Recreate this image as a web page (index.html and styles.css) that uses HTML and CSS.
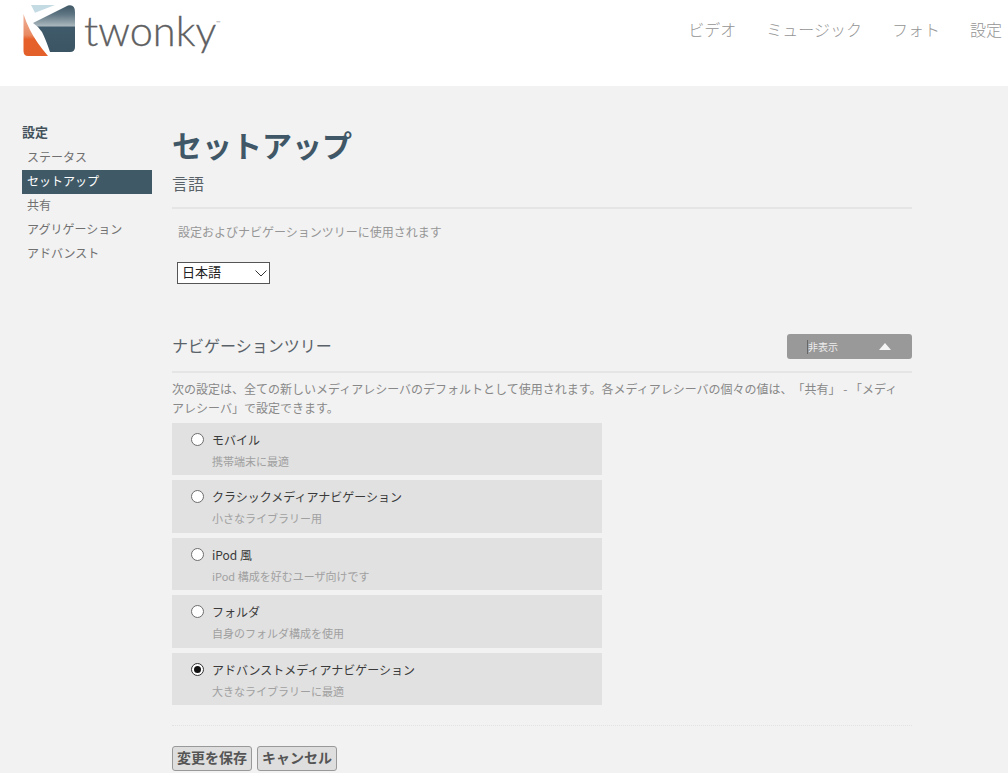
FILE: index.html
```html
<!DOCTYPE html>
<html lang="ja">
<head>
<meta charset="utf-8">
<title>twonky</title>
<link rel="stylesheet" href="styles.css">
</head>
<body>
<header class="header">
  <div class="logo">
    <svg class="logo-mark" width="60" height="60" viewBox="20 0 60 60">
      <defs>
        <linearGradient id="steel" x1="0" y1="0" x2="0" y2="1">
          <stop offset="0" stop-color="#3f5866"/>
          <stop offset="0.2" stop-color="#5f7683"/>
          <stop offset="0.44" stop-color="#a9b6bc"/>
          <stop offset="0.47" stop-color="#3f5a6a"/>
          <stop offset="1" stop-color="#3c5564"/>
        </linearGradient>
        <linearGradient id="ember" x1="0" y1="0" x2="0" y2="1">
          <stop offset="0" stop-color="#eeb39c"/>
          <stop offset="0.5" stop-color="#e98a62"/>
          <stop offset="0.6" stop-color="#e5602a"/>
          <stop offset="1" stop-color="#e4602a"/>
        </linearGradient>
      </defs>
      <path d="M33 23 L68 5.500 Q75 4 75 12 L75 47 Q75 52 70 52 L50 52 Q46 40 42 32 Q39 27 33 23 Z" fill="url(#steel)"/>
      <path d="M31 5 L55 5 L35 12.700 Z" fill="#c4dbe3"/>
      <path d="M23.500 14 L23.500 51 Q23.500 56 28 56 L48 56 Q36 42 30 30 Q26 22 23.500 14 Z" fill="url(#ember)"/>
    </svg>
    <span class="wordmark">twonky<sup class="tm">™</sup></span>
  </div>
  <nav class="topnav">
    <a class="topnav-item">ビデオ</a>
    <a class="topnav-item">ミュージック</a>
    <a class="topnav-item">フォト</a>
    <a class="topnav-item">設定</a>
  </nav>
</header>
<div class="page">
  <aside class="sidebar">
    <div class="side-title">設定</div>
    <a class="side-item">ステータス</a>
    <a class="side-item active">セットアップ</a>
    <a class="side-item">共有</a>
    <a class="side-item">アグリゲーション</a>
    <a class="side-item">アドバンスト</a>
  </aside>
  <main class="main">
    <h1 class="title">セットアップ</h1>
    <h2 class="section-head lang-head">言語</h2>
    <p class="lang-desc">設定およびナビゲーションツリーに使用されます</p>
    <div class="select">
      <span>日本語</span>
      <svg class="chev" width="12" height="7" viewBox="0 0 12 7"><path d="M.5.5 6 6 11.500.5" fill="none" stroke="#333" stroke-width="1"/></svg>
    </div>
    <div class="tree-head">
      <h2 class="section-head">ナビゲーションツリー</h2>
      <button class="toggle"><span class="toggle-label">非表示</span><span class="tri"></span></button>
    </div>
    <p class="tree-desc">次の設定は、全ての新しいメディアレシーバのデフォルトとして使用されます。各メディアレシーバの個々の値は、「共有」 - 「メディアレシーバ」で設定できます。</p>
    <div class="options">
      <label class="option"><span class="radio"></span><span class="opt-text"><span class="opt-name">モバイル</span><span class="opt-sub">携帯端末に最適</span></span></label>
      <label class="option"><span class="radio"></span><span class="opt-text"><span class="opt-name">クラシックメディアナビゲーション</span><span class="opt-sub">小さなライブラリー用</span></span></label>
      <label class="option"><span class="radio"></span><span class="opt-text"><span class="opt-name">iPod 風</span><span class="opt-sub">iPod 構成を好むユーザ向けです</span></span></label>
      <label class="option"><span class="radio"></span><span class="opt-text"><span class="opt-name">フォルダ</span><span class="opt-sub">自身のフォルダ構成を使用</span></span></label>
      <label class="option"><span class="radio on"></span><span class="opt-text"><span class="opt-name">アドバンストメディアナビゲーション</span><span class="opt-sub">大きなライブラリーに最適</span></span></label>
    </div>
    <div class="actions">
      <button class="btn">変更を保存</button>
      <button class="btn">キャンセル</button>
    </div>
  </main>
</div>
</body>
</html>
```
FILE: styles.css
```css
* { box-sizing: border-box; }
html, body { margin: 0; height: 773px; overflow: hidden; }
body {
  background: #f2f2f2;
  font-family: "Noto Sans CJK JP", "Liberation Sans", sans-serif;
  color: #666;
  text-spacing-trim: space-all;
}
.header {
  height: 86px;
  background: #fff;
  display: flex;
  justify-content: space-between;
  align-items: flex-start;
}
.logo { display: flex; align-items: flex-start; padding-left: 20px; height: 60px; }
.logo-mark { display: block; flex: none; }
.wordmark {
  font-family: Lato, "Liberation Sans", sans-serif;
  font-weight: 300;
  font-size: 41.500px;
  line-height: 54px;
  color: #5f6062;
  margin: 3px 0 0 4px;
  -webkit-text-stroke: 0.3px #5f6062;
}
.tm { font-size: 6px; vertical-align: 21px; line-height: 1; -webkit-text-stroke: 0; }
.topnav { display: flex; gap: 30px; padding-top: 17px; margin-right: 6px; }
.topnav-item { font-size: 16px; line-height: 24px; color: #949494; font-weight: 300; white-space: nowrap; }
.page { display: flex; padding: 38px 96px 0 22px; }
.sidebar { width: 130px; flex: none; margin-right: 20px; }
.side-title { font-size: 13px; font-weight: 700; color: #44525c; line-height: 16px; margin-bottom: 6px; }
.side-item { display: block; height: 24px; line-height: 22px; font-size: 12px; padding-left: 5px; color: #707070; white-space: nowrap; }
.side-item.active { background: #3f5966; color: #fff; }
.main { flex: 1; min-width: 0; }
.title { margin: -1px 0 3px; font-size: 30px; line-height: 42px; font-weight: 700; color: #3f5766; }
.section-head { margin: 0; font-size: 16px; font-weight: 400; line-height: 22px; color: #5a6269; }
.lang-head { padding: 5px 0 13px; border-bottom: 2px solid #e5e5e5; margin-top: -1px; }
.lang-desc { margin: 13px 0 0 6px; font-size: 12px; line-height: 20px; color: #969696; }
.select {
  margin: 20px 0 0 5px;
  width: 93px; height: 22px;
  border: 1px solid #555;
  background: #fff;
  display: flex; align-items: center; justify-content: space-between;
  padding: 0 2px 3px 4px;
  font-size: 13px; color: #222;
  line-height: 18px;
}
.chev { margin-top: 4px; }
.tree-head {
  display: flex; justify-content: space-between; align-items: flex-start;
  margin-top: 50px;
  padding-bottom: 12px;
  border-bottom: 2px solid #e5e5e5;
}
.toggle {
  width: 125px; height: 25px; border: 0; border-radius: 3px;
  background: #999; color: #eee;
  font: inherit; font-size: 10px;
  display: flex; align-items: center; justify-content: space-between;
  padding: 0 21px 0 20px;
}
.toggle-label { line-height: 14px; border-left: 1px solid #666; }
.tri { width: 0; height: 0; border-left: 6.500px solid transparent; border-right: 6.500px solid transparent; border-bottom: 7px solid #f4f4f4; }
.tree-desc { margin: 6px 0 0; padding-right: 8px; font-size: 12px; line-height: 19px; color: #888; }
.options { width: 430px; margin-top: 6px; display: flex; flex-direction: column; gap: 5px; }
.option { display: flex; height: 52.400px; background: #e1e1e1; padding: 9px 0 0 19px; }
.radio {
  width: 13px; height: 13px; border-radius: 50%;
  border: 1px solid #6d6d6d; background: #fff; flex: none; margin-top: 1px;
  display: flex; align-items: center; justify-content: center;
}
.radio.on { border-color: #333; }
.radio.on::after { content: ""; width: 7px; height: 7px; border-radius: 50%; background: #111; }
.opt-text { display: flex; flex-direction: column; margin-left: 8px; }
.opt-name { font-size: 12px; line-height: 16px; color: #3a3a3a; white-space: nowrap; }
.opt-sub { font-size: 11px; line-height: 18px; margin-top: 4px; color: #a0a0a0; white-space: nowrap; }
.actions { margin-top: 20px; border-top: 1px dotted #e2e2e2; padding-top: 20px; display: flex; gap: 5px; }
.btn {
  height: 25px; padding: 0 4px 2px; border: 1px solid #999; border-radius: 3px;
  background: #dedede; color: #555;
  font: inherit; font-size: 14px; font-weight: 700; line-height: 20px;
  white-space: nowrap;
}
```
